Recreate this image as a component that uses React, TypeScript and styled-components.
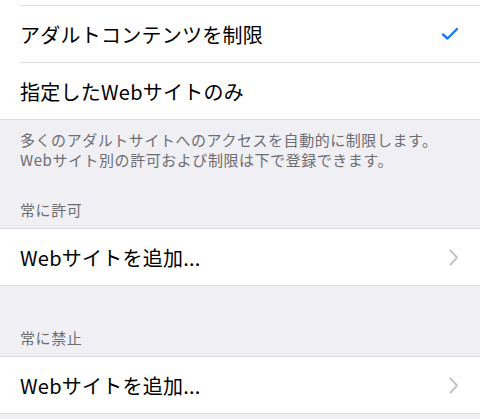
import React from "react";
import styled, { createGlobalStyle } from "styled-components";

const Global = createGlobalStyle`
  html, body { margin: 0; padding: 0; }
  body {
    background: #efeff4;
    font-family: "Noto Sans CJK JP", "Noto Sans", sans-serif;
    -webkit-font-smoothing: antialiased;
  }
`;

const SEP = "#dcdce0";

const Page = styled.div`
  width: 480px;
  min-height: 419px;
  background: #efeff4;
`;

const Group = styled.div<{ $top?: boolean; $stub?: boolean }>`
  background: #ffffff;
  border-top: ${(p) => (p.$top ? `1px solid ${SEP}` : "none")};
  border-bottom: 1px solid ${SEP};
  padding-top: ${(p) => (p.$stub ? "5px" : "0")};
`;

const Row = styled.div`
  padding-left: 20px;
`;

const RowInner = styled.div<{ $divider?: boolean }>`
  height: 56px;
  display: flex;
  align-items: center;
  justify-content: space-between;
  padding-right: 20px;
  border-top: ${(p) => (p.$divider ? `1px solid ${SEP}` : "none")};
`;

const Label = styled.span`
  font-size: 20px;
  color: #000;
  letter-spacing: 0.25px;
`;

const Footer = styled.div`
  padding: 10px 20px 0;
  font-size: 15px;
  line-height: 20px;
  letter-spacing: 0.55px;
  color: #6d6d72;
`;

const Header = styled.div<{ $pt: number }>`
  padding: ${(p) => p.$pt}px 20px 8px;
  font-size: 15px;
  line-height: 20px;
  letter-spacing: 0.6px;
  color: #6d6d72;
`;

const Check = () => (
  <svg width="18" height="14" viewBox="0 0 18 14" style={{ marginRight: 1 }}>
    <path d="M2 7.5 L6.5 11.5 L16 2" fill="none" stroke="#1a7cf4" strokeWidth="2.4" strokeLinecap="round" strokeLinejoin="round" />
  </svg>
);

const Chevron = () => (
  <svg width="10" height="17" viewBox="0 0 10 17" style={{ marginRight: 1 }}>
    <path d="M1.5 1.5 L8 8.5 L1.5 15.5" fill="none" stroke="#c4c4c9" strokeWidth="2" strokeLinecap="round" strokeLinejoin="round" />
  </svg>
);

export default function App() {
  return (
    <Page>
      <Global />
      <Group $stub>
        <Row>
          <RowInner $divider>
            <Label>アダルトコンテンツを制限</Label>
            <Check />
          </RowInner>
        </Row>
        <Row>
          <RowInner $divider>
            <Label>指定したWebサイトのみ</Label>
          </RowInner>
        </Row>
      </Group>
      <Footer>
        多くのアダルトサイトへのアクセスを自動的に制限します。
        <br />
        Webサイト別の許可および制限は下で登録できます。
      </Footer>
      <Header $pt={30}>常に許可</Header>
      <Group $top>
        <Row>
          <RowInner>
            <Label>Webサイトを追加...</Label>
            <Chevron />
          </RowInner>
        </Row>
      </Group>
      <Header $pt={42}>常に禁止</Header>
      <Group $top>
        <Row>
          <RowInner>
            <Label>Webサイトを追加...</Label>
            <Chevron />
          </RowInner>
        </Row>
      </Group>
    </Page>
  );
}
